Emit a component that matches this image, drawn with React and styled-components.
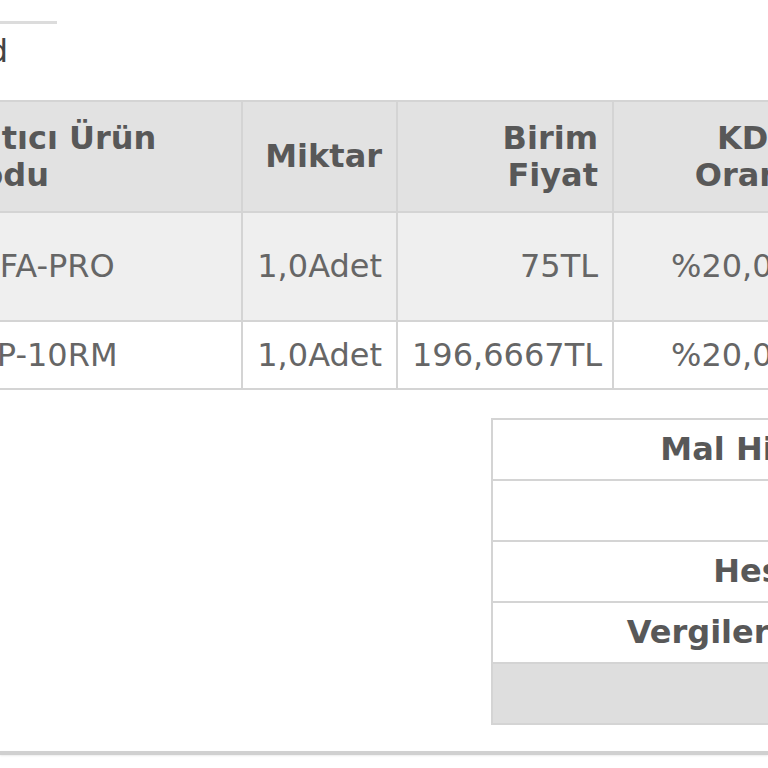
import React from "react";
import styled, { createGlobalStyle } from "styled-components";

const rows = [
  { code: "SAFA-PRO", qty: "1,0Adet", price: "75TL", rate: "%20,00", tax: "15TL", tall: true },
  { code: "TSP-10RM", qty: "1,0Adet", price: "196,6667TL", rate: "%20,00", tax: "39,3333TL" },
];

const totals = [
  { label: "Mal Hizmet Toplam Tutarı", value: "271,67 TL" },
  { label: "Toplam İskonto", value: "0,00 TL" },
  { label: "Hesaplanan KDV(%20)", value: "54,33 TL" },
  { label: "Vergiler Dahil Toplam Tutar", value: "326,00 TL" },
  { label: "Ödenecek Tutar", value: "326,00 TL", shade: true },
];

export default function App() {
  return (
    <>
      <GlobalStyle />
      <Viewport>
        <Rule />
        <Note>
          <span>Ödeme Durumu: Paid</span>
        </Note>

        <InvoiceTable>
          <colgroup>
            <Col $w={300} />
            <Col $w={155} />
            <Col $w={216} />
            <Col $w={195} />
            <Col $w={220} />
          </colgroup>
          <thead>
            <Row $h={111}>
              <Th $align="left">Satıcı Ürün Kodu</Th>
              <Th>Miktar</Th>
              <Th>Birim Fiyat</Th>
              <Th>KDV Oranı</Th>
              <Th>KDV Tutarı</Th>
            </Row>
          </thead>
          <tbody>
            {rows.map((r) => (
              <Row key={r.code} $h={r.tall ? 109 : 68} $shade={r.tall}>
                <Td $align="left">{r.code}</Td>
                <Td>{r.qty}</Td>
                <Td>{r.price}</Td>
                <Td>{r.rate}</Td>
                <Td>{r.tax}</Td>
              </Row>
            ))}
          </tbody>
        </InvoiceTable>

        <TotalsTable>
          <colgroup>
            <Col $w={641} />
            <Col $w={250} />
          </colgroup>
          <tbody>
            {totals.map((t) => (
              <TotalRow key={t.label} $shade={t.shade}>
                <TotalLabel>{t.label}</TotalLabel>
                <TotalValue>{t.value}</TotalValue>
              </TotalRow>
            ))}
          </tbody>
        </TotalsTable>

        <Footer />
      </Viewport>
    </>
  );
}

const GlobalStyle = createGlobalStyle`
  html, body {
    margin: 0;
    padding: 0;
    background: #fff;
  }
  body {
    font-family: "DejaVu Sans", Verdana, sans-serif;
  }
`;

const Viewport = styled.div`
  width: 768px;
  height: 768px;
  overflow: hidden;
  display: flex;
  flex-direction: column;
  align-items: flex-start;
`;

const Rule = styled.div`
  flex: none;
  margin: 21px 0 0 -300px;
  width: 357px;
  border-top: 3px solid #dcdcdc;
`;

const Note = styled.div`
  flex: none;
  margin: 9px 0 0 -300px;
  width: 308px;
  display: flex;
  justify-content: flex-end;
  font-size: 32px;
  line-height: 36px;
  color: #444;
  white-space: nowrap;
`;

const InvoiceTable = styled.table`
  flex: none;
  margin: 31px 0 0 -59px;
  width: 1086px;
  table-layout: fixed;
  border-collapse: collapse;
  font-size: 32px;
  line-height: 37px;
`;

const Col = styled.col`
  width: ${({ $w }) => $w}px;
`;

const Row = styled.tr`
  height: ${({ $h }) => $h}px;
  background: ${({ $shade }) => ($shade ? "#efefef" : "#fff")};
`;

const Th = styled.th`
  background: #e2e2e2;
  border: 2px solid #d4d4d4;
  padding: 0 14px;
  font-weight: bold;
  color: #585858;
  text-align: ${({ $align }) => $align || "right"};
  vertical-align: middle;
`;

const Td = styled.td`
  border: 2px solid #d4d4d4;
  padding: 0 14px;
  color: #666;
  text-align: ${({ $align }) => $align || "right"};
  vertical-align: middle;
  white-space: nowrap;
  overflow: hidden;
`;

const TotalsTable = styled.table`
  flex: none;
  margin: 28px 0 0 491px;
  width: 891px;
  table-layout: fixed;
  border-collapse: collapse;
  font-size: 32px;
  line-height: 37px;
`;

const TotalRow = styled.tr`
  height: 61px;
  background: ${({ $shade }) => ($shade ? "#dedede" : "#fff")};
`;

const TotalLabel = styled.td`
  border: 2px solid #d4d4d4;
  padding: 0 14px;
  font-weight: bold;
  color: #585858;
  text-align: right;
  white-space: nowrap;
`;

const TotalValue = styled.td`
  border: 2px solid #d4d4d4;
  padding: 0 14px;
  color: #666;
  text-align: right;
  white-space: nowrap;
`;

const Footer = styled.div`
  flex: none;
  margin-top: 26px;
  width: 768px;
  border-top: 4px solid #d0d0d0;
  box-shadow: 0 1px 2px rgba(0, 0, 0, 0.08);
`;
